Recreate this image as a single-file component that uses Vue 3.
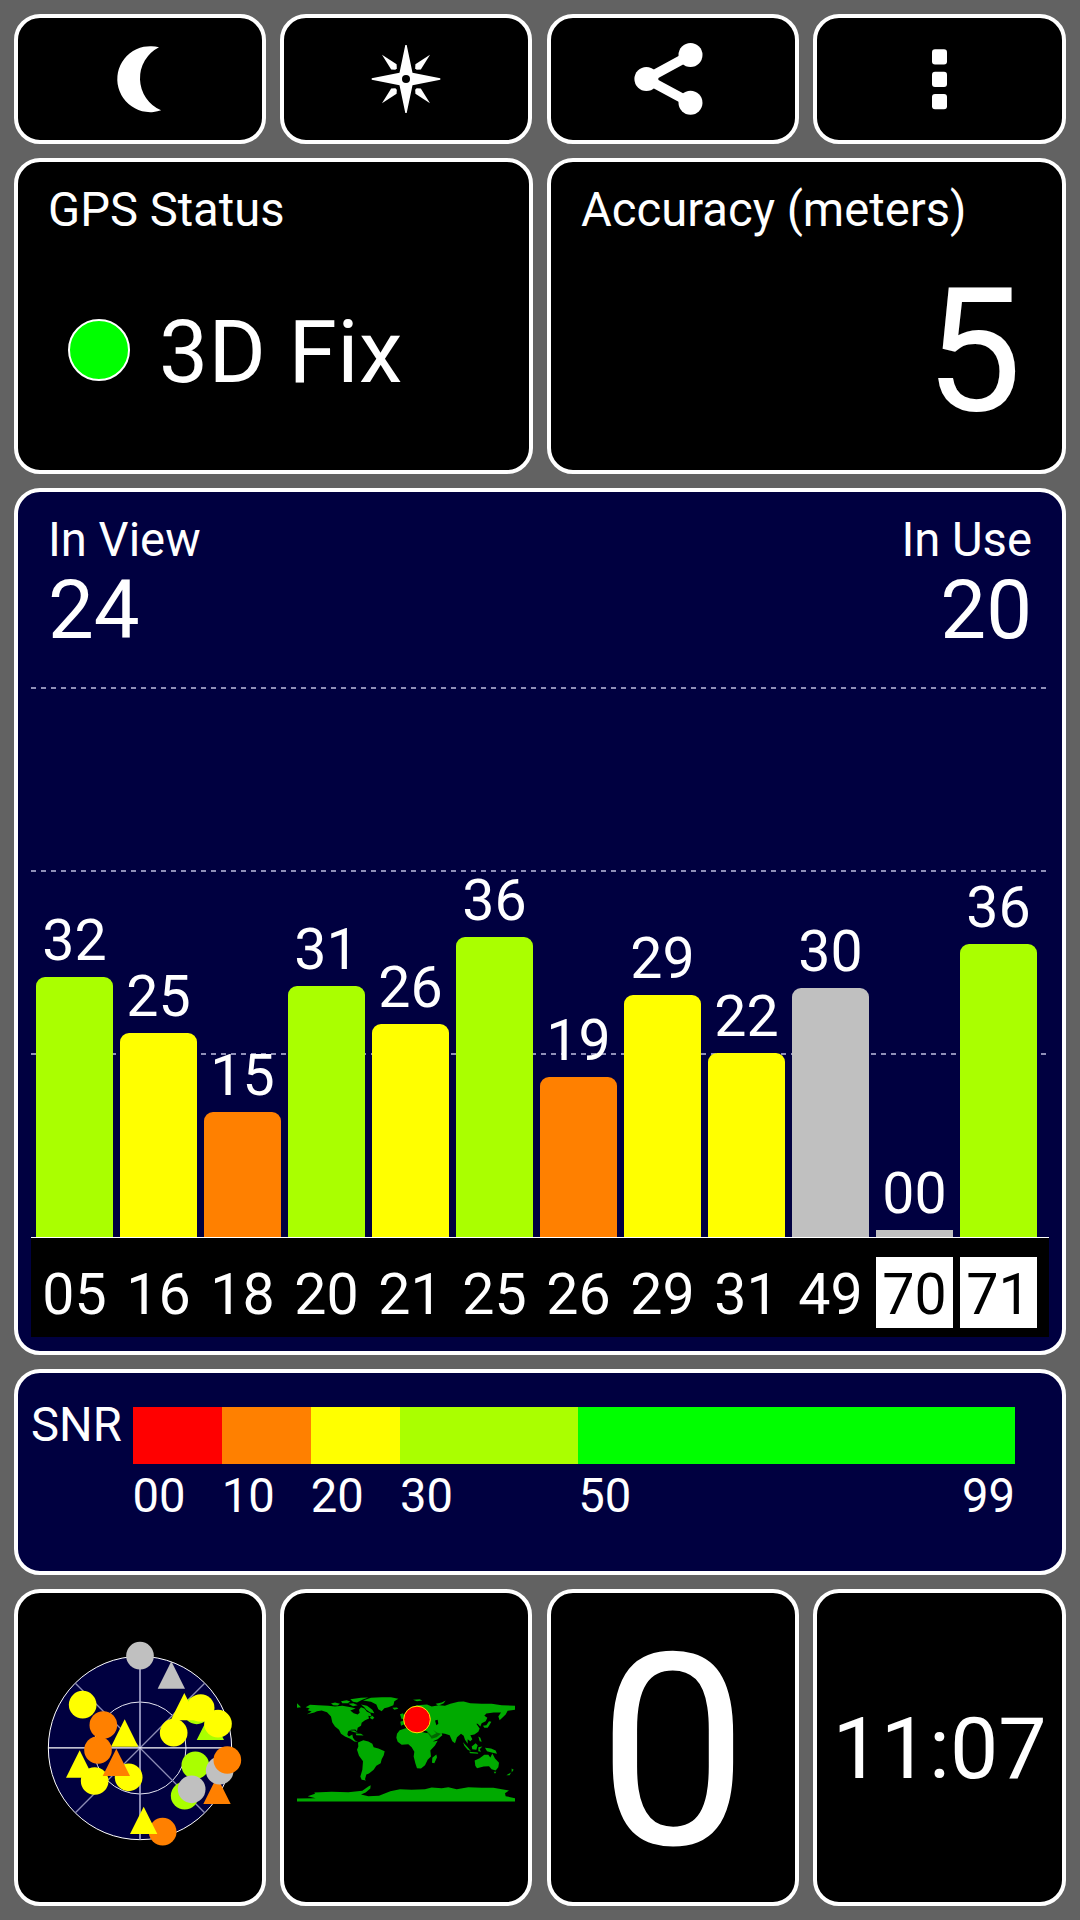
<script setup>
import { ref } from "vue";

const colors = {
  red: "#ff0000",
  orange: "#ff8000",
  yellow: "#ffff00",
  lime: "#aaff00",
  green: "#00ff00",
  gray: "#c0c0c0",
};

// Satellites shown in the bar chart
const satellites = ref([
  { id: "05", snr: "32", height: 260, color: "lime" },
  { id: "16", snr: "25", height: 204, color: "yellow" },
  { id: "18", snr: "15", height: 125, color: "orange" },
  { id: "20", snr: "31", height: 251, color: "lime" },
  { id: "21", snr: "26", height: 213, color: "yellow" },
  { id: "25", snr: "36", height: 300, color: "lime" },
  { id: "26", snr: "19", height: 160, color: "orange" },
  { id: "29", snr: "29", height: 242, color: "yellow" },
  { id: "31", snr: "22", height: 184, color: "yellow" },
  { id: "49", snr: "30", height: 249, color: "gray" },
  { id: "70", snr: "00", height: 7, color: "gray", glonass: true },
  { id: "71", snr: "36", height: 293, color: "lime", glonass: true },
]);

const snrScale = [
  { from: "00", size: 10, color: "red" },
  { from: "10", size: 10, color: "orange" },
  { from: "20", size: 10, color: "yellow" },
  { from: "30", size: 20, color: "lime" },
  { from: "50", to: "99", size: 49, color: "green" },
];

// Sky view markers, in drawing order. Triangles use x/y as their apex
const sky = [
  { x: 424, y: 93, color: "gray", tri: true },
  { x: 330, y: 76, color: "gray" },
  { x: 158, y: 223, color: "yellow" },
  { x: 220, y: 284, color: "orange" },
  { x: 204, y: 359, color: "orange" },
  { x: 284, y: 267, color: "yellow", tri: true },
  { x: 500, y: 240, color: "lime" },
  { x: 512, y: 233, color: "yellow" },
  { x: 463, y: 188, color: "yellow", tri: true },
  { x: 431, y: 307, color: "yellow" },
  { x: 541, y: 247, color: "lime", tri: true },
  { x: 564, y: 280, color: "yellow" },
  { x: 149, y: 360, color: "yellow", tri: true },
  { x: 194, y: 452, color: "yellow" },
  { x: 296, y: 441, color: "yellow" },
  { x: 259, y: 355, color: "orange", tri: true },
  { x: 496, y: 405, color: "lime" },
  { x: 561, y: 439, color: "orange", tri: true },
  { x: 569, y: 421, color: "gray" },
  { x: 592, y: 389, color: "orange" },
  { x: 464, y: 496, color: "lime" },
  { x: 485, y: 477, color: "gray" },
  { x: 398, y: 604, color: "orange" },
  { x: 341, y: 529, color: "yellow", tri: true },
];

const triangle = (s) => `${s.x},${s.y} ${s.x + 41},${s.y + 82} ${s.x - 41},${s.y + 82}`;
</script>

<template>
  <div class="screen">
    <div class="tiles toolbar">
      <button class="panel" aria-label="Night mode">
        <svg class="icon" viewBox="-0.8 0 100 100">
          <path d="M68.2 18.3A33 33 0 1 0 70.3 81.3A34.8 34.8 0 0 1 68.2 18.3Z" fill="#fff" />
        </svg>
      </button>
      <button class="panel" aria-label="Compass">
        <svg class="icon" viewBox="0 0 100 100">
          <g transform="translate(50 50)" fill="#fff">
            <path d="M-.7-34H.7L6.5-6.3L34.3-.8V.8L6.5 6.3L.7 34H-.7L-6.5 6.3L-34.3.8V-.8L-6.5-6.3Z" />
            <path d="M-24-24.2L-9.4-14.8L-9.2-10.8L-10.6-9.2L-14.8-9.4Z" />
            <path d="M-24-24.2L-9.4-14.8L-9.2-10.8L-10.6-9.2L-14.8-9.4Z" transform="scale(-1 1)" />
            <path d="M-24-24.2L-9.4-14.8L-9.2-10.8L-10.6-9.2L-14.8-9.4Z" transform="scale(1 -1)" />
            <path d="M-24-24.2L-9.4-14.8L-9.2-10.8L-10.6-9.2L-14.8-9.4Z" transform="scale(-1 -1)" />
            <circle r="4" fill="#000" />
          </g>
        </svg>
      </button>
      <button class="panel" aria-label="Share">
        <svg class="icon" viewBox="-0.8 0 100 100">
          <path d="M66.7 26L22.6 50L66.7 73.8" fill="none" stroke="#fff" stroke-width="9.6" />
          <circle cx="22.6" cy="50" r="12" fill="#fff" />
          <circle cx="66.7" cy="26" r="12" fill="#fff" />
          <circle cx="66.7" cy="73.8" r="12" fill="#fff" />
        </svg>
      </button>
      <button class="panel" aria-label="Menu">
        <svg class="icon" viewBox="0 0 100 100" fill="#fff">
          <rect x="42" y="20.3" width="15" height="15.2" rx="3" />
          <rect x="42" y="42.8" width="15" height="15.2" rx="3" />
          <rect x="42" y="65" width="15" height="15.2" rx="3" />
        </svg>
      </button>
    </div>

    <div class="status">
      <div class="panel info">
        <div class="label">GPS Status</div>
        <div class="fix">
          <span class="led"></span>
          <span class="fix-text">3D Fix</span>
        </div>
      </div>
      <div class="panel info">
        <div class="label">Accuracy (meters)</div>
        <div class="accuracy">5</div>
      </div>
    </div>

    <div class="panel navy chart">
      <div class="counts">
        <div>
          <div class="label">In View</div>
          <div class="count">24</div>
        </div>
        <div class="right">
          <div class="label">In Use</div>
          <div class="count">20</div>
        </div>
      </div>
      <div class="plot">
        <svg class="grid" width="1018" height="586">
          <path d="M0 37H1017M0 220H1017M0 403H1017" stroke="#8f8fb8" stroke-width="2" stroke-dasharray="5 5" />
        </svg>
        <div v-for="sat in satellites" :key="sat.id" class="bar-col">
          <div class="snr">{{ sat.snr }}</div>
          <div
            class="bar"
            :class="{ flat: sat.height < 10 }"
            :style="{ height: sat.height + 'px', background: colors[sat.color] }"
          ></div>
        </div>
      </div>
      <div class="axis">
        <div v-for="sat in satellites" :key="sat.id" class="sat-id" :class="{ glonass: sat.glonass }">
          {{ sat.id }}
        </div>
      </div>
    </div>

    <div class="panel navy legend">
      <div class="label legend-title">SNR</div>
      <div class="scale">
        <div v-for="part in snrScale" :key="part.from" class="part" :style="{ flexGrow: part.size }">
          <div class="swatch" :style="{ background: colors[part.color] }"></div>
          <div class="label range">
            <span>{{ part.from }}</span>
            <span v-if="part.to">{{ part.to }}</span>
          </div>
        </div>
      </div>
    </div>

    <div class="tiles bottom">
      <div class="panel">
        <svg width="220" height="230" viewBox="0 8 660 690">
          <circle cx="330" cy="353" r="275" fill="#000040" stroke="#fff" stroke-width="3" />
          <circle cx="330" cy="353" r="138" fill="none" stroke="#e4e4f0" stroke-width="3" />
          <path d="M136 159L524 547M524 159L136 547" stroke="#8c8cb4" stroke-width="4" />
          <path d="M330 78V628" stroke="#a6a6cc" stroke-width="5" />
          <path d="M55 352.5H605" stroke="#fff" stroke-width="3.5" />
          <template v-for="(s, index) in sky" :key="index">
            <polygon v-if="s.tri" :points="triangle(s)" :fill="colors[s.color]" />
            <circle v-else :cx="s.x" :cy="s.y" r="41.5" :fill="colors[s.color]" />
          </template>
        </svg>
      </div>
      <div class="panel">
        <svg width="240" height="140" viewBox="3 -7.5 720 420">
          <g fill="#00aa00">
            <!-- North America -->
            <path d="M36 68L48 80L36 82ZM62 80L75 73L100 74L130 76L150 78L172 76L198 80L212 84L196 90L206 98L218 102L224 97L222 88L228 80L238 84L246 94L256 98L260 108L250 106L252 114L240 119L230 127L228 136L218 142L216 152L211 147L198 148L189 153L187 163L192 168L202 162L204 172L210 180L219 184L208 183L196 175L180 168L168 160L162 148L150 138L142 126L138 108L126 95L110 90L96 92L88 96L66 101L80 93L68 89L74 84Z" />
            <path d="M138 69L150 66L165 70L158 75L145 74ZM168 62L185 59L196 63L188 68L172 68ZM190 70L205 68L218 74L204 77ZM196 56L228 52L250 51L232 58L216 66L204 64ZM228 72L246 76L262 88L268 98L256 96L244 88L238 80ZM262 106L268 112L262 117L254 112Z" />
            <path d="M192 150L208 150L219 157L208 155ZM212 159L228 160L236 165L214 164Z" />
            <!-- Greenland and Iceland -->
            <path d="M234 60L258 52L290 50L318 50L340 55L328 62L325 74L310 80L298 83L290 92L280 86L274 72L258 64ZM322 82L336 81L340 85L328 88Z" />
            <!-- South America -->
            <path d="M219 186L235 179L250 183L262 190L266 200L280 204L299 212L296 225L290 236L287 248L274 256L266 268L252 279L244 282L240 296L243 300L230 298L226 288L232 268L234 242L222 226L216 208L220 198Z" />
            <!-- Africa -->
            <path d="M344 149L362 143L382 145L404 154L430 158L438 174L446 183L458 181L450 195L436 210L438 228L428 238L420 254L408 264L396 263L391 248L386 228L388 214L380 200L370 191L350 193L338 184L334 172L336 160ZM454 222L456 230L448 248L441 247L442 232Z" />
            <!-- Europe and Asia -->
            <path d="M356 132L348 136L346 124L356 120L350 110L362 98L376 82L396 74L426 72L440 78L462 74L480 76L496 70L520 64L536 63L556 68L590 70L620 70L650 74L690 76V88L668 91L662 102L644 119L640 108L648 96L626 96L604 99L598 106L607 112L602 122L590 128L586 138L578 130L574 130L584 144L580 154L568 162L556 164L562 176L556 182L548 176L548 190L540 178L536 166L528 160L516 170L510 188L502 182L494 164L480 160L470 158L472 164L458 176L442 183L434 170L426 152L410 150L396 140Z" />
            <path d="M612 136L608 142L598 142L594 136L604 134L612 122L619 124ZM345 101L354 98L360 110L350 116ZM384 58L404 56L412 60L396 62ZM452 70L470 66L482 60L476 68L460 76Z" />
            <!-- Islands of South-East Asia and Oceania -->
            <path d="M534 185L548 200L558 212L548 208L538 196ZM560 198L572 188L578 194L574 208L562 206ZM552 214L578 216L580 220L556 218ZM580 200L592 198L584 206L588 214L580 212ZM580 168L586 172L590 184L584 182ZM600 202L618 204L632 210L636 220L620 216L606 212Z" />
            <path d="M569 240L584 233L598 223L610 223L616 231L622 219L630 234L642 247L640 260L632 270L620 266L612 257L596 258L576 263L571 256ZM626 274L634 274L630 280ZM680 264L686 268L680 276ZM678 276L674 284L664 284Z" />
            <!-- Antarctica -->
            <path d="M36 363V354L92 353L68 347L90 340L88 336L140 334L190 335L232 331L250 318L257 314L256 324L242 336L228 342L250 347L282 346L316 332L345 326L380 328L420 326L440 321L470 323L490 320L515 326L550 320L590 322L625 322L672 330L660 338L662 347L690 353V363Z" />
          </g>
          <path d="M450 120L458 118L460 130L454 134Z" fill="#000" />
          <path d="M424 150L440 175L455 170L468 160L455 156L444 148L454 158L440 166Z" fill="#000" opacity=".4" />
          <circle cx="396" cy="117" r="40" fill="#f00" stroke="#ffe600" stroke-width="3" />
        </svg>
      </div>
      <div class="panel speed">0</div>
      <div class="panel clock">11:07</div>
    </div>
  </div>
</template>

<style>
body {
  margin: 0;
  background: #626262;
}
</style>

<style scoped>
.screen {
  box-sizing: border-box;
  width: 1080px;
  height: 1920px;
  padding: 14px;
  display: flex;
  flex-direction: column;
  gap: 14px;
  background: #626262;
  color: white;
  font-family: Roboto, sans-serif;
}

.tiles {
  display: grid;
  grid-template-columns: 252px 252px 253px 1fr;
  gap: 14px;
}

.tiles .panel {
  display: flex;
  align-items: center;
  justify-content: center;
}

.tiles .panel:nth-child(3) {
  margin-left: 1px;
}

.panel {
  box-sizing: border-box;
  margin: 0;
  padding: 0;
  border: 4px solid white;
  border-radius: 26px;
  background: black;
  color: white;
}

.navy {
  background: #000040;
}

.toolbar {
  height: 130px;
}

.icon {
  width: 100px;
  height: 100px;
}

.status {
  display: flex;
  gap: 14px;
  height: 316px;
}

.status .info {
  flex: 1 1 0;
  min-width: 0;
  padding: 19px 30px 0;
}

.label {
  font-size: 47.2px;
  line-height: 58px;
  white-space: nowrap;
}

.fix {
  display: flex;
  align-items: center;
  height: 62px;
  margin: 80px 0 0 20px;
}

.led {
  box-sizing: border-box;
  width: 62px;
  height: 62px;
  border: 2px solid white;
  border-radius: 50%;
  background: #00ff00;
}

.fix-text {
  margin: 4px 0 0 29px;
  font-size: 87.5px;
  line-height: 62px;
  letter-spacing: 0.4px;
}

.accuracy {
  margin: 27px 10px 0 0;
  font-size: 172px;
  line-height: 171px;
  text-align: right;
}

.chart {
  height: 867px;
}

.counts {
  display: flex;
  justify-content: space-between;
  padding: 19px 30px 0;
}

.count {
  font-size: 81.6px;
  line-height: 82px;
}

.right {
  text-align: right;
}

.plot {
  position: relative;
  box-sizing: border-box;
  display: flex;
  align-items: flex-end;
  gap: 7px;
  height: 586px;
  margin: 0 13px;
  padding-left: 5px;
}

.grid {
  position: absolute;
  top: 0;
  left: 0;
}

.bar-col {
  position: relative;
  width: 77px;
}

.snr {
  margin-bottom: 8px;
  font-size: 57.3px;
  line-height: 57px;
  text-align: center;
}

.bar {
  border-radius: 9px 9px 0 0;
}

.bar.flat {
  border-radius: 0;
}

.axis {
  display: flex;
  gap: 7px;
  margin: 0 13px;
  padding: 19px 0 9px 5px;
  border-top: 1px solid white;
  background: black;
}

.sat-id {
  width: 77px;
  height: 71px;
  font-size: 57.3px;
  line-height: 75px;
  text-align: center;
}

.sat-id.glonass {
  background: white;
  color: black;
}

.legend {
  display: flex;
  height: 206px;
  padding: 23px 47px 0 13px;
}

.legend-title {
  width: 101.5px;
}

.scale {
  display: flex;
  flex: 1;
  margin-top: 11px;
}

.part {
  flex-basis: 0;
  min-width: 0;
}

.swatch {
  height: 57px;
}

.range {
  display: flex;
  justify-content: space-between;
  margin-top: 3px;
}

.bottom {
  height: 317px;
}

.bottom .speed {
  padding-top: 8px;
  font-size: 268px;
  line-height: 268px;
}

.bottom .clock {
  padding-top: 2px;
  font-size: 86px;
}
</style>
